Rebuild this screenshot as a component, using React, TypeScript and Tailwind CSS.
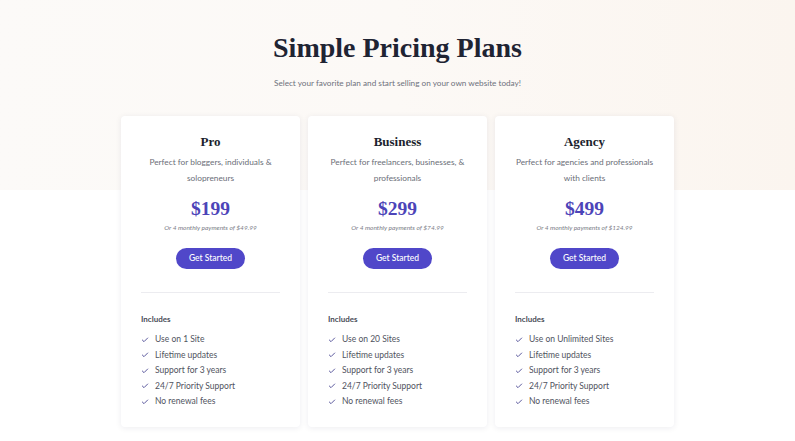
import { Check } from "lucide-react";

type Plan = {
  name: string;
  desc: string;
  price: string;
  monthly: string;
  sites: string;
};

const plans: Plan[] = [
  {
    name: "Pro",
    desc: "Perfect for bloggers, individuals & solopreneurs",
    price: "$199",
    monthly: "$49.99",
    sites: "Use on 1 Site",
  },
  {
    name: "Business",
    desc: "Perfect for freelancers, businesses, & professionals",
    price: "$299",
    monthly: "$74.99",
    sites: "Use on 20 Sites",
  },
  {
    name: "Agency",
    desc: "Perfect for agencies and professionals with clients",
    price: "$499",
    monthly: "$124.99",
    sites: "Use on Unlimited Sites",
  },
];

const serif = "font-['Liberation_Serif',serif]";

function PlanCard({ plan }: { plan: Plan }) {
  const features = [
    plan.sites,
    "Lifetime updates",
    "Support for 3 years",
    "24/7 Priority Support",
    "No renewal fees",
  ];

  return (
    <div className="w-[179px] h-[311px] bg-white rounded-[4px] shadow-[0_1px_6px_rgba(30,30,60,0.08)] flex flex-col">
      <div className="flex flex-col items-center px-4 pt-[17px]">
        <h3 className={`${serif} text-[13px] font-bold text-[#1c1f2e] leading-[18px]`}>{plan.name}</h3>
        <p className="mt-[3px] text-[8.3px] leading-[16px] text-[#6b6e78] text-center">{plan.desc}</p>
        <div className={`${serif} mt-[10px] text-[19.5px] font-bold text-[#4c44b8] leading-[26px]`}>{plan.price}</div>
        <p className="mt-[1px] text-[6.5px] italic text-[#7a7c86]">Or 4 monthly payments of {plan.monthly}</p>
        <button className="mt-[15px] w-[69px] h-[21px] rounded-full bg-[#5047c9] text-white text-[8.5px] font-medium">
          Get Started
        </button>
      </div>
      <div className="mx-5 mt-[23px] border-t border-[#ececf0]" />
      <div className="px-5 pt-[20px]">
        <p className="text-[8px] font-bold text-[#4a4d58] leading-[12px]">Includes</p>
        <ul className="mt-[7px] flex flex-col">
          {features.map((f) => (
            <li key={f} className="flex items-center h-[15.5px] text-[8.5px] text-[#50535e]">
              <Check className="w-[8px] h-[8px] text-[#5c5a9e] mr-[6px]" strokeWidth={3} />
              {f}
            </li>
          ))}
        </ul>
      </div>
    </div>
  );
}

export default function App() {
  return (
    <div className="w-[795px] h-[441px] bg-white font-['Lato',sans-serif] overflow-hidden relative">
      <div className="absolute inset-x-0 top-0 h-[190px] bg-gradient-to-r from-[#fcfaf8] via-[#fcf9f6] to-[#fbf5ef]" />
      <div className="relative flex flex-col items-center">
        <h1 className={`${serif} mt-[30px] text-[28px] font-bold text-[#1f2433] leading-[36px]`}>Simple Pricing Plans</h1>
        <p className="mt-[11px] text-[8.2px] text-[#6e717c]">Select your favorite plan and start selling on your own website today!</p>
        <div className="mt-[27px] flex gap-[8px]">
          {plans.map((p) => (
            <PlanCard key={p.name} plan={p} />
          ))}
        </div>
      </div>
    </div>
  );
}
